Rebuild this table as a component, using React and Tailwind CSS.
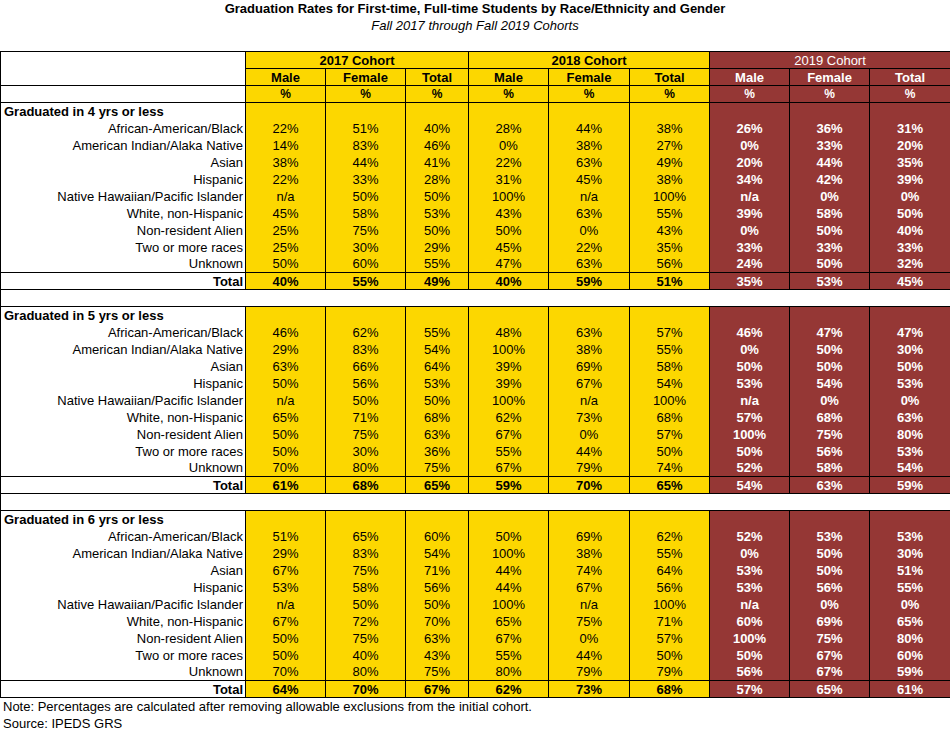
import React from "react";

const sections = [
  {
    title: "Graduated in 4 yrs or less",
    rows: [
      ["African-American/Black", "22%", "51%", "40%", "28%", "44%", "38%", "26%", "36%", "31%"],
      ["American Indian/Alaka Native", "14%", "83%", "46%", "0%", "38%", "27%", "0%", "33%", "20%"],
      ["Asian", "38%", "44%", "41%", "22%", "63%", "49%", "20%", "44%", "35%"],
      ["Hispanic", "22%", "33%", "28%", "31%", "45%", "38%", "34%", "42%", "39%"],
      ["Native Hawaiian/Pacific Islander", "n/a", "50%", "50%", "100%", "n/a", "100%", "n/a", "0%", "0%"],
      ["White, non-Hispanic", "45%", "58%", "53%", "43%", "63%", "55%", "39%", "58%", "50%"],
      ["Non-resident Alien", "25%", "75%", "50%", "50%", "0%", "43%", "0%", "50%", "40%"],
      ["Two or more races", "25%", "30%", "29%", "45%", "22%", "35%", "33%", "33%", "33%"],
      ["Unknown", "50%", "60%", "55%", "47%", "63%", "56%", "24%", "50%", "32%"],
    ],
    total: ["40%", "55%", "49%", "40%", "59%", "51%", "35%", "53%", "45%"],
  },
  {
    title: "Graduated in 5 yrs or less",
    rows: [
      ["African-American/Black", "46%", "62%", "55%", "48%", "63%", "57%", "46%", "47%", "47%"],
      ["American Indian/Alaka Native", "29%", "83%", "54%", "100%", "38%", "55%", "0%", "50%", "30%"],
      ["Asian", "63%", "66%", "64%", "39%", "69%", "58%", "50%", "50%", "50%"],
      ["Hispanic", "50%", "56%", "53%", "39%", "67%", "54%", "53%", "54%", "53%"],
      ["Native Hawaiian/Pacific Islander", "n/a", "50%", "50%", "100%", "n/a", "100%", "n/a", "0%", "0%"],
      ["White, non-Hispanic", "65%", "71%", "68%", "62%", "73%", "68%", "57%", "68%", "63%"],
      ["Non-resident Alien", "50%", "75%", "63%", "67%", "0%", "57%", "100%", "75%", "80%"],
      ["Two or more races", "50%", "30%", "36%", "55%", "44%", "50%", "50%", "56%", "53%"],
      ["Unknown", "70%", "80%", "75%", "67%", "79%", "74%", "52%", "58%", "54%"],
    ],
    total: ["61%", "68%", "65%", "59%", "70%", "65%", "54%", "63%", "59%"],
  },
  {
    title: "Graduated in 6 yrs or less",
    rows: [
      ["African-American/Black", "51%", "65%", "60%", "50%", "69%", "62%", "52%", "53%", "53%"],
      ["American Indian/Alaka Native", "29%", "83%", "54%", "100%", "38%", "55%", "0%", "50%", "30%"],
      ["Asian", "67%", "75%", "71%", "44%", "74%", "64%", "53%", "50%", "51%"],
      ["Hispanic", "53%", "58%", "56%", "44%", "67%", "56%", "53%", "56%", "55%"],
      ["Native Hawaiian/Pacific Islander", "n/a", "50%", "50%", "100%", "n/a", "100%", "n/a", "0%", "0%"],
      ["White, non-Hispanic", "67%", "72%", "70%", "65%", "75%", "71%", "60%", "69%", "65%"],
      ["Non-resident Alien", "50%", "75%", "63%", "67%", "0%", "57%", "100%", "75%", "80%"],
      ["Two or more races", "50%", "40%", "43%", "55%", "44%", "50%", "50%", "67%", "60%"],
      ["Unknown", "70%", "80%", "75%", "80%", "79%", "79%", "56%", "67%", "59%"],
    ],
    total: ["64%", "70%", "67%", "62%", "73%", "68%", "57%", "65%", "61%"],
  },
];

const yellow = "bg-[#fcd700] text-black";
const red = "bg-[#953735] text-white font-bold";

function tone(i) {
  return i < 6 ? yellow : red;
}

function Section({ s, last }) {
  return (
    <>
      <tr className="h-[17px]">
        <td className="border-l border-r border-t border-black pl-[3px] text-left font-bold">{s.title}</td>
        {s.total.map((_, i) => (
          <td key={i} className={`border-x border-t border-black ${tone(i)}`} />
        ))}
      </tr>
      {s.rows.map(([label, ...vals]) => (
        <tr key={label} className="h-[17px]">
          <td className="border-x border-black pr-[2px] text-right">{label}</td>
          {vals.map((v, i) => (
            <td key={i} className={`border-x border-black text-center ${tone(i)}`}>
              {v}
            </td>
          ))}
        </tr>
      ))}
      <tr className="h-[17px] font-bold">
        <td className="border border-black pr-[2px] text-right">Total</td>
        {s.total.map((v, i) => (
          <td key={i} className={`border border-black text-center ${tone(i)}`}>
            {v}
          </td>
        ))}
      </tr>
      {!last && (
        <tr className="h-[17px]">
          <td colSpan={10} className="border-l border-black" />
        </tr>
      )}
    </>
  );
}

export default function App() {
  return (
    <div className="w-[950px] bg-white font-['Liberation_Sans',Arial,sans-serif] text-[13px] leading-[15px] text-black">
      <div className="flex h-[17px] items-center justify-center font-bold">
        Graduation Rates for First-time, Full-time Students by Race/Ethnicity and Gender
      </div>
      <div className="flex h-[17px] items-center justify-center italic">Fall 2017 through Fall 2019 Cohorts</div>
      <div className="h-[17px]" />

      <table className="w-[950px] table-fixed border-collapse">
        <colgroup>
          <col className="w-[245px]" />
          <col className="w-[80px]" />
          <col className="w-[80px]" />
          <col className="w-[63px]" />
          <col className="w-[80px]" />
          <col className="w-[81px]" />
          <col className="w-[80px]" />
          <col className="w-[80px]" />
          <col className="w-[80px]" />
          <col className="w-[81px]" />
        </colgroup>
        <tbody>
          <tr className="h-[17px]">
            <td rowSpan={2} className="border border-black" />
            <td colSpan={3} className={`border border-black text-center font-bold ${yellow}`}>2017 Cohort</td>
            <td colSpan={3} className={`border border-black text-center font-bold ${yellow}`}>2018 Cohort</td>
            <td colSpan={3} className="border border-black bg-[#953735] text-center text-white">2019 Cohort</td>
          </tr>
          <tr className="h-[17px] font-bold">
            {["Male", "Female", "Total", "Male", "Female", "Total", "Male", "Female", "Total"].map((h, i) => (
              <td key={i} className={`border border-black text-center ${tone(i)}`}>
                {h}
              </td>
            ))}
          </tr>
          <tr className="h-[17px] font-bold">
            <td className="border border-black" />
            {Array.from({ length: 9 }).map((_, i) => (
              <td key={i} className={`border border-black text-center text-[12px] ${tone(i)}`}>
                %
              </td>
            ))}
          </tr>
          {sections.map((s, i) => (
            <Section key={s.title} s={s} last={i === sections.length - 1} />
          ))}
        </tbody>
      </table>

      <div className="flex h-[17px] items-center pl-[3px]">
        Note: Percentages are calculated after removing allowable exclusions from the initial cohort.
      </div>
      <div className="flex h-[17px] items-center pl-[3px]">Source: IPEDS GRS</div>
    </div>
  );
}
